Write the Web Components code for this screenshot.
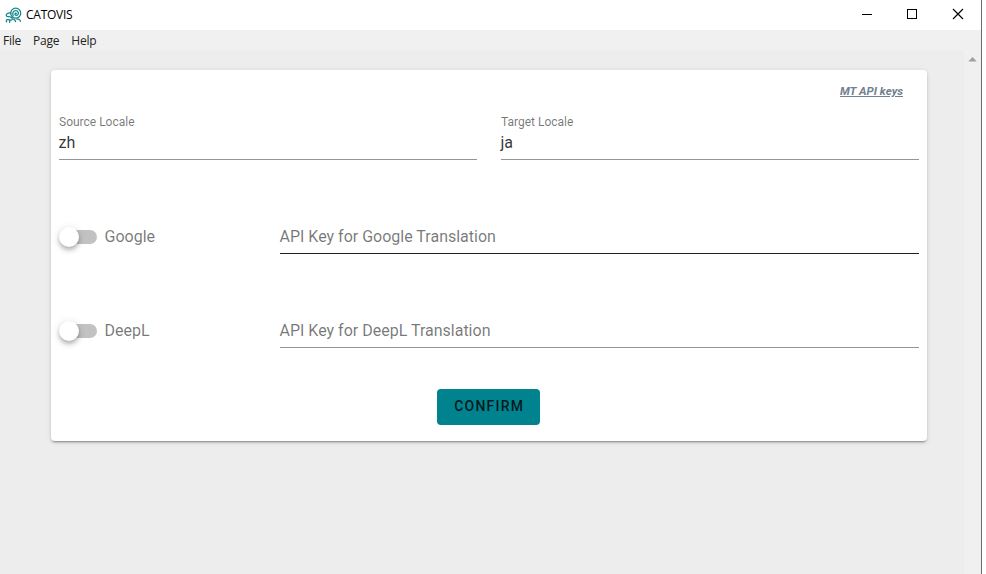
<!DOCTYPE html>
<html lang="en"><head><meta charset="utf-8"><title>CATOVIS</title>
<style>html,body{margin:0;height:574px;overflow:hidden;background:#fff;font-family:Roboto,sans-serif}</style></head>
<body>
<app-window>
  <title-bar slot="title" label="CATOVIS"></title-bar>
  <menu-bar slot="menu"><span>File</span><span>Page</span><span>Help</span></menu-bar>
  <settings-card>
    <span slot="link">MT API keys</span>
    <text-field slot="locale" label="Source Locale">zh</text-field>
    <text-field slot="locale" label="Target Locale">ja</text-field>
    <api-row name="Google" active>API Key for Google Translation</api-row>
    <api-row name="DeepL">API Key for DeepL Translation</api-row>
    <action-button slot="action">CONFIRM</action-button>
  </settings-card>
</app-window>
<script>
const define = (name, html, init) => customElements.define(name, class extends HTMLElement {
  constructor() {
    super();
    this.attachShadow({mode: 'open'}).innerHTML = html;
  }
  connectedCallback() { if (init) init(this, this.shadowRoot); }
});

define('app-window', `<style>
:host{display:flex;flex-direction:column;box-sizing:border-box;width:982px;height:574px;border-right:1px solid #6b6b6b;background:#ededed}
main{flex:1;display:flex;min-height:0}
.page{flex:1;padding:20px 37px 0 51px}
.scroll{width:17px;background:#f0f0f0;display:flex;justify-content:center}
svg{display:block;margin-top:7px}
</style><slot name="title"></slot><slot name="menu"></slot>
<main><div class="page"><slot></slot></div><div class="scroll"><svg width="9" height="5" viewBox="0 0 9 5"><path d="M0.3 4.4 4.5 0 8.7 4.4Z" fill="#a0a0a0"/></svg></div></main>`);

define('title-bar', `<style>
:host{display:flex;align-items:center;height:30px;background:#fff;font:12px "Open Sans",sans-serif;color:#000}
.logo{margin-left:5px;width:17px;height:17px}
.label{flex:1;margin-left:4px;line-height:30px;letter-spacing:-.25px}
.controls{display:flex}
.controls svg{display:block;width:46px;height:30px;fill:none;stroke:#000}
.controls svg:first-child{width:45px}
.controls svg:last-child{width:45px}
</style>
<svg class="logo" viewBox="0 0 17 17" fill="none" stroke="#168588" stroke-width="1.3" stroke-linecap="round">
<circle cx="10.7" cy="6.2" r="5"/>
<path d="M8.2 8.7C6.9 6.3 8.4 3.6 10.8 3.7c2.4.1 3.3 2.7 1.9 4.1-1.3 1.2-3.1.2-2.6-1.2.3-.7 1.1-.7 1.2-.2"/>
<path d="M5.8 6C2.9 5.6 1 7 1.3 8.6c.3 1.4 2.2 1 3.7 1.2 1.7.2 3 1.9 2 3-1 1-3.2-.7-4.6-.2-1.2.4-1.3 1.7-.8 2.2M4.9 13.2l-.3 2.2M8.7 12.4c.8.3 1.7 1.1 1.9 2.3M12 12.1c1.6-.2 3.3.6 3.4 2.2"/></svg>
<span class="label"></span>
<div class="controls">
<svg viewBox="0 0 45 30" shape-rendering="crispEdges"><path d="M17 14.5h10"/></svg>
<svg viewBox="0 0 46 30" shape-rendering="crispEdges"><path d="M17.5 9.5h9v9h-9z"/></svg>
<svg viewBox="0 0 45 30"><path d="M17 9l10 10M27 9l-10 10" stroke-width="1.15"/></svg></div>`,
(el, r) => r.querySelector('.label').textContent = el.getAttribute('label'));

define('menu-bar', `<style>
:host{display:flex;gap:12px;height:20px;padding-left:3px;background:#f0f0f0;font:12px/22px "Open Sans",sans-serif;letter-spacing:-.23px;color:#222}
</style><slot></slot>`);

define('settings-card', `<style>
:host{display:flex;flex-direction:column;box-sizing:border-box;width:876px;height:371px;padding:0 8px;background:#fff;border-radius:4px;box-shadow:0 3px 1px -2px rgba(0,0,0,.2),0 2px 2px rgba(0,0,0,.14),0 1px 5px rgba(0,0,0,.12)}
.link{align-self:flex-end;margin:13px 16px 0 0;height:17px;font:italic bold 11.5px/17px Roboto,sans-serif;color:#708090;text-decoration:underline}
.locales{display:grid;grid-template-columns:1fr 1fr;gap:24px;margin-top:14px}
.keys{display:flex;flex-direction:column;gap:60px;margin-top:60px}
.action{display:flex;justify-content:center;margin-top:41px;padding-right:1px}
</style><div class="link"><slot name="link"></slot></div><div class="locales"><slot name="locale"></slot></div>
<div class="keys"><slot></slot></div><div class="action"><slot name="action"></slot></div>`);

define('text-field', `<style>
:host{display:block;height:45px;border-bottom:1px solid #949494;color:rgba(0,0,0,.8)}
.label{height:16px;font-size:12px;line-height:16px;color:rgba(0,0,0,.54)}
.value{font-size:16px;line-height:26px;margin-left:-.5px}
</style><div class="label"></div><div class="value"><slot></slot></div>`,
(el, r) => r.querySelector('.label').textContent = el.getAttribute('label'));

define('api-row', `<style>
:host{display:grid;grid-template-columns:221px 1fr;height:34px;font-size:16px;line-height:34px;color:rgba(0,0,0,.54)}
.toggle{display:flex;align-items:center;height:34px}
.track{display:flex;align-items:center;width:38px;height:14px;border-radius:7px;background:linear-gradient(90deg,transparent 4px,#c2c2c2 4px);margin-right:7.5px}
.thumb{width:20px;height:20px;border-radius:50%;background:#fff;box-shadow:0 2px 4px -1px rgba(0,0,0,.2),0 4px 5px rgba(0,0,0,.14),0 1px 10px rgba(0,0,0,.12)}
.field{height:33px;border-bottom:1px solid #949494;text-indent:-.5px}
:host([active]) .field{border-color:#212121}
</style><div class="toggle"><span class="track"><span class="thumb"></span></span><span class="name"></span></div><div class="field"><slot></slot></div>`,
(el, r) => r.querySelector('.name').textContent = el.getAttribute('name'));

define('action-button', `<style>
:host{display:flex;align-items:center;justify-content:center;box-sizing:border-box;width:103px;height:36px;padding:0 0 2px 1.5px;border-radius:4px;background:#00838f;color:rgba(0,0,0,.82);font-size:14px;font-weight:500;letter-spacing:1.25px;line-height:34px}
</style><span><slot></slot></span>`);
</script>
</body></html>
